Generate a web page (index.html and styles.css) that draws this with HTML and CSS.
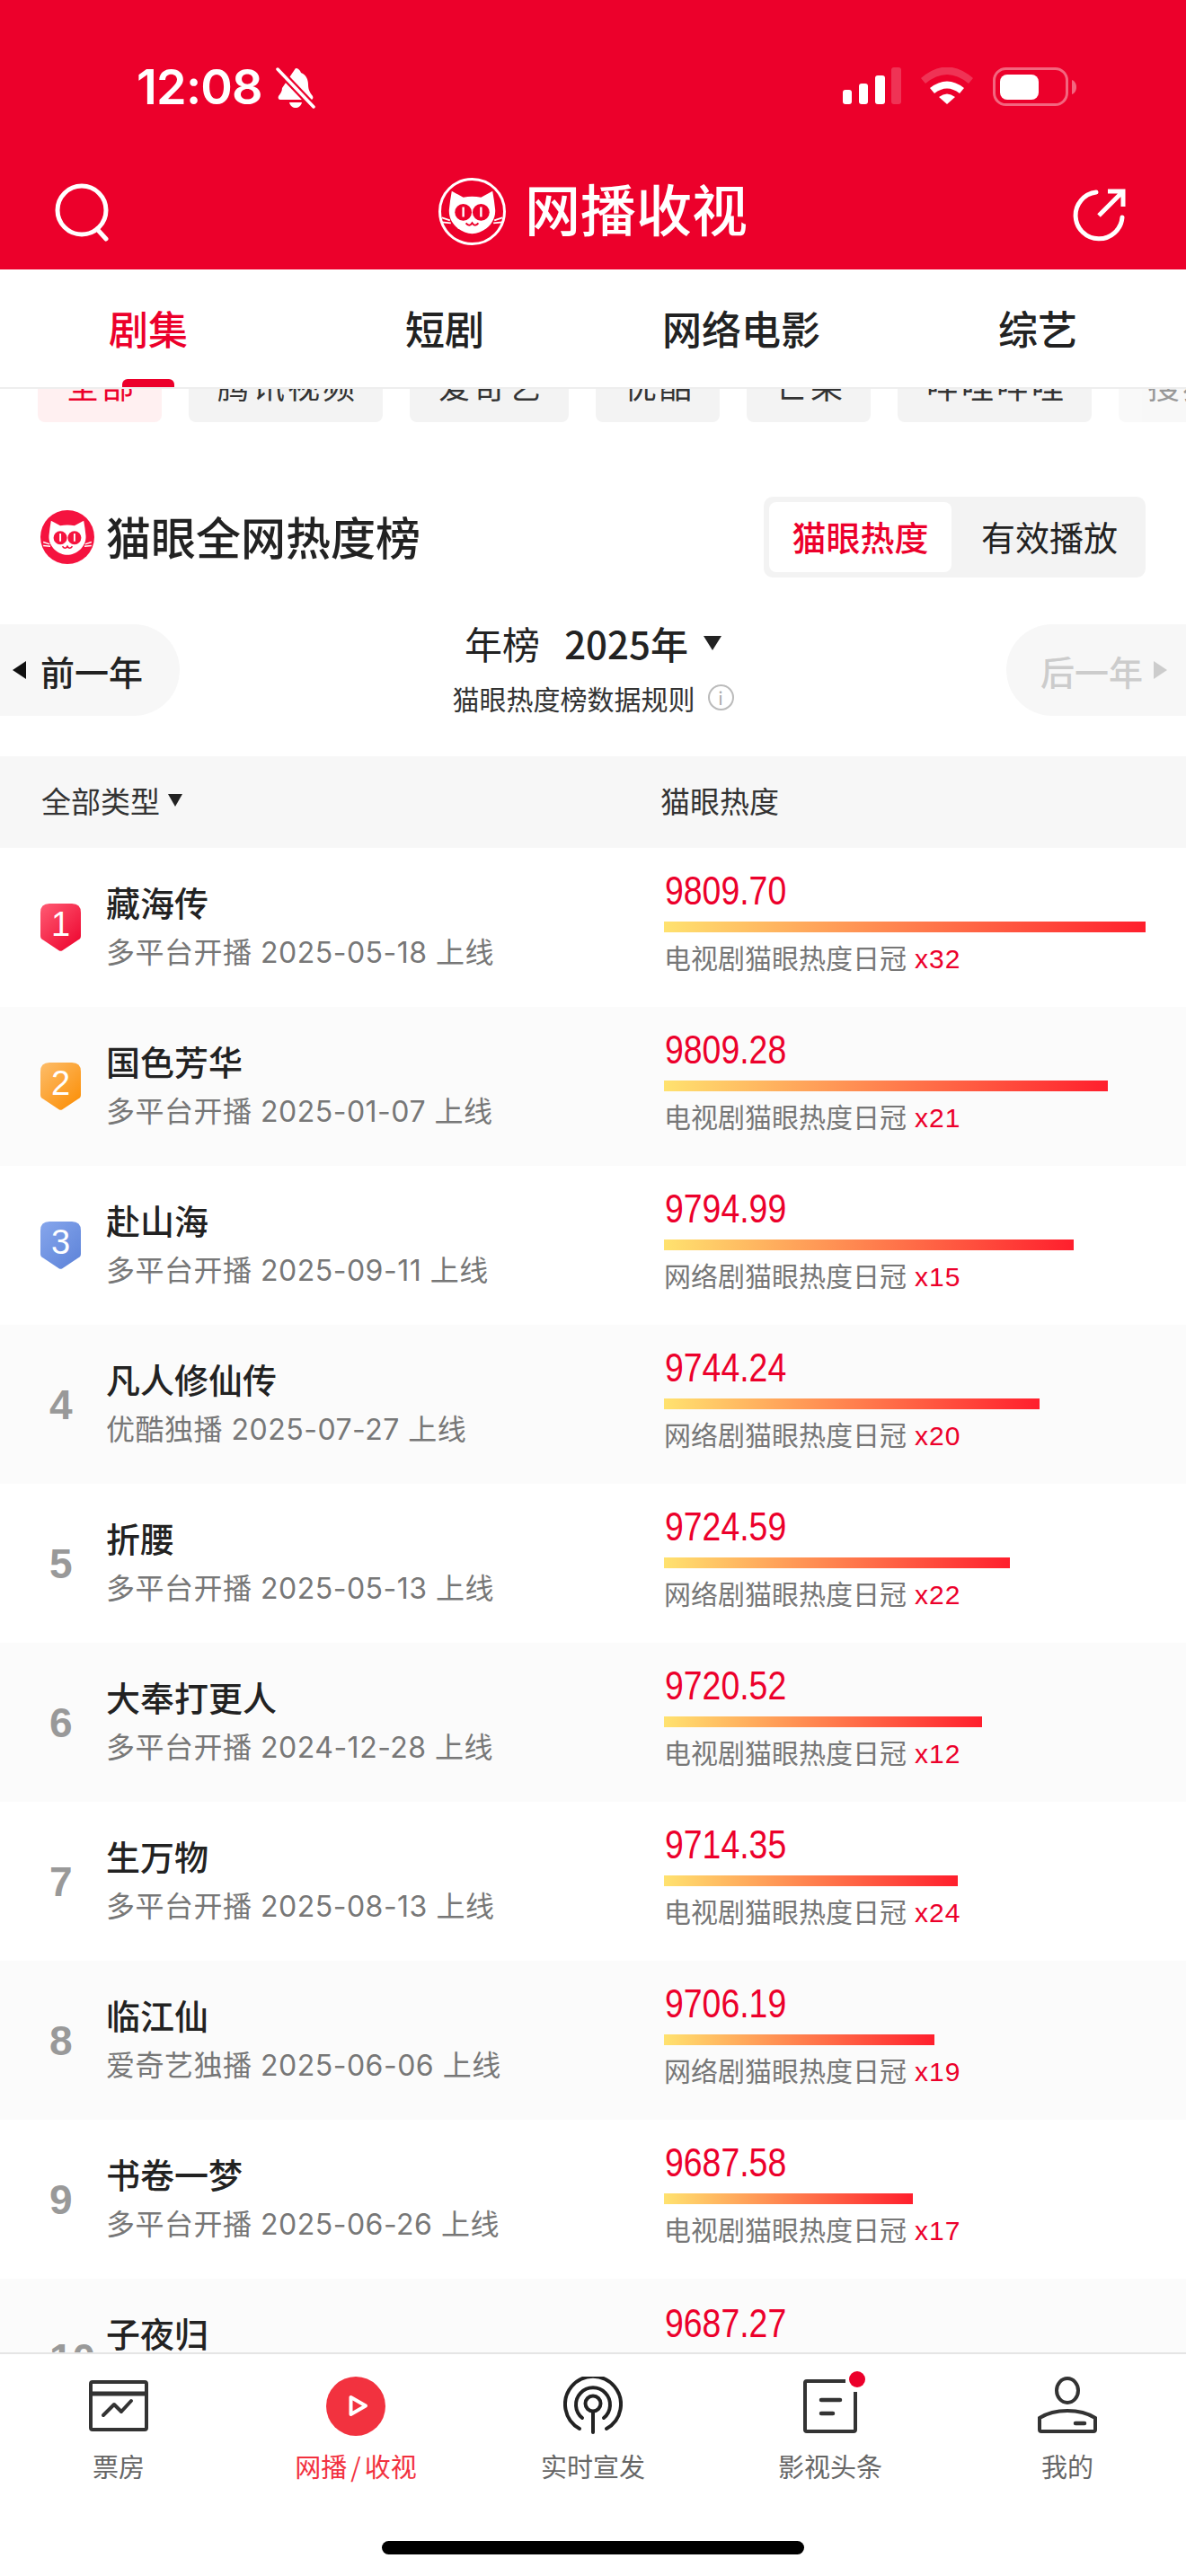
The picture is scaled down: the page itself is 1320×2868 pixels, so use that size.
FILE: index.html
```html
<!DOCTYPE html>
<html lang="zh-CN">
<head>
  <meta charset="UTF-8">
  <meta name="viewport" content="width=device-width, initial-scale=1.0">
  <title>网播收视</title>
  <link rel="stylesheet" href="styles.css">
</head>
<body>
  <!-- cat head, shared by the header logo and the chart title -->
  <svg class="defs" width="0" height="0">
    <symbol id="cat" viewBox="-38 -38 76 76">
      <path fill="#fff" d="M-23 -23 L-10 -16 Q0 -18 10 -16 L23 -23 Q25 -12 26 -2 C27 14 12 25 0 25 C-12 25 -27 14 -26 -2 Q-25 -12 -23 -23Z"/>
      <circle cx="-10" cy="1" r="9.500" fill="var(--cat-eye)"/>
      <circle cx="10" cy="1" r="9.500" fill="var(--cat-eye)"/>
      <path d="M-10 -5V6M10 -5V6" stroke="#fff" stroke-width="2.400" fill="none"/>
      <path d="M-7 13 Q-3 18 0 13 Q3 18 7 13" stroke="var(--cat-eye)" stroke-width="2" fill="none"/>
      <path d="M-34 7 L-25 10M-34 12 L-24 13M34 7 L25 10M34 12 L24 13" stroke="#fff" stroke-width="1.800" fill="none"/>
    </symbol>
  </svg>

  <header class="top">
    <div class="status">
      <div class="status-left">
        <span class="clock">12:08</span>
        <svg class="bell" width="44" height="46" viewBox="0 0 44 46">
          <path fill="#fff" d="M22 1c3 0 5 2 6 5 6 2 8 8 8 13 0 6 2 9 5 13 1 2 0 4-2 4H5c-2 0-3-2-2-4 2-3 4-5 4-9z"/>
          <path fill="#fff" d="M15 39h14c-1 4-4 6-7 6s-6-2-7-6z"/>
          <path d="M2 2l40 42" stroke="#ec002b" stroke-width="8"/>
          <path d="M2 2l40 42" stroke="#fff" stroke-width="3.500" stroke-linecap="round"/>
        </svg>
      </div>
      <div class="status-right">
        <svg width="65" height="41" viewBox="0 0 65 41">
          <rect x="0" y="25" width="10" height="16" rx="3" fill="#fff"/>
          <rect x="18" y="18" width="10" height="23" rx="3" fill="#fff"/>
          <rect x="36" y="9" width="11" height="32" rx="3" fill="#fff"/>
          <rect x="54" y="0" width="11" height="41" rx="3" fill="#fff" opacity=".2"/>
        </svg>
        <svg width="58" height="41" viewBox="0 0 58 41">
          <path d="M0 12 Q29 -13 58 12 L53 18 Q29 -2 5 18Z" fill="#fff" opacity=".2"/>
          <path d="M10 23 Q29 8 48 23 L43 29 Q29 18 15 29Z" fill="#fff"/>
          <path d="M20 33 Q29 26 38 33 L29 41Z" fill="#fff"/>
        </svg>
        <svg width="94" height="44" viewBox="0 0 94 44">
          <rect x="1.500" y="1.500" width="81" height="40" rx="13" fill="none" stroke="#fff" stroke-width="3" opacity=".4"/>
          <rect x="8" y="8" width="43" height="28" rx="8" fill="#fff"/>
          <path d="M88 14c3 1 5 4 5 8s-2 7-5 8z" fill="#fff" opacity=".4"/>
        </svg>
      </div>
    </div>
    <div class="titlebar">
      <svg width="66" height="66" viewBox="0 0 66 66" class="ico-search">
        <circle cx="31" cy="30" r="27" fill="none" stroke="#fff" stroke-width="5"/>
        <path d="M48 51l10 11" stroke="#fff" stroke-width="5" stroke-linecap="round"/>
      </svg>
      <div class="brand">
        <span class="brand-logo">
          <svg width="75" height="75"><use href="#cat"/></svg>
        </span>
        <span class="brand-name">网播收视</span>
      </div>
      <svg width="62" height="62" viewBox="0 0 62 62">
        <path d="M28 5A26 26 0 1 0 57 33" fill="none" stroke="#fff" stroke-width="5" stroke-linecap="round"/>
        <path d="M31 31L57 5M41 4h17v17" fill="none" stroke="#fff" stroke-width="5"/>
      </svg>
    </div>
  </header>

  <nav class="tabs">
    <a class="tab active">剧集</a>
    <a class="tab">短剧</a>
    <a class="tab">网络电影</a>
    <a class="tab">综艺</a>
  </nav>

  <div class="chips">
    <span class="chip chip-on">全部</span>
    <span class="chip">腾讯视频</span>
    <span class="chip">爱奇艺</span>
    <span class="chip">优酷</span>
    <span class="chip">芒果</span>
    <span class="chip">哔哩哔哩</span>
    <span class="chip chip-fade">搜狐</span>
  </div>

  <section class="head">
    <div class="head-title">
      <span class="head-logo">
        <svg width="60" height="60"><use href="#cat"/></svg>
      </span>
      <h1>猫眼全网热度榜</h1>
    </div>
    <div class="switch">
      <span class="switch-on">猫眼热度</span>
      <span class="switch-off">有效播放</span>
    </div>
  </section>

  <section class="years">
    <div class="year-btn prev"><i class="tri-left"></i>前一年</div>
    <div class="year-mid">
      <div class="year-now">年榜<b>2025年</b><i class="tri-down"></i></div>
      <div class="year-rule">猫眼热度榜数据规则<span class="info">i</span></div>
    </div>
    <div class="year-btn next">后一年<i class="tri-right"></i></div>
  </section>

  <div class="thead">
    <div class="thead-type">全部类型<i class="tri-small"></i></div>
    <div class="thead-val">猫眼热度</div>
  </div>

  <main class="list">
    <div class="row">
      <div class="rank"><span class="medal medal-1">1</span></div>
      <div class="info-col"><div class="name">藏海传</div><div class="meta">多平台开播 2025-05-18 上线</div></div>
      <div class="val-col"><div class="num">9809.70</div><div class="bar" style="width:536px"></div><div class="cap">电视剧猫眼热度日冠<em>x32</em></div></div>
    </div>
    <div class="row">
      <div class="rank"><span class="medal medal-2">2</span></div>
      <div class="info-col"><div class="name">国色芳华</div><div class="meta">多平台开播 2025-01-07 上线</div></div>
      <div class="val-col"><div class="num">9809.28</div><div class="bar" style="width:494px"></div><div class="cap">电视剧猫眼热度日冠<em>x21</em></div></div>
    </div>
    <div class="row">
      <div class="rank"><span class="medal medal-3">3</span></div>
      <div class="info-col"><div class="name">赴山海</div><div class="meta">多平台开播 2025-09-11 上线</div></div>
      <div class="val-col"><div class="num">9794.99</div><div class="bar" style="width:456px"></div><div class="cap">网络剧猫眼热度日冠<em>x15</em></div></div>
    </div>
    <div class="row">
      <div class="rank">4</div>
      <div class="info-col"><div class="name">凡人修仙传</div><div class="meta">优酷独播 2025-07-27 上线</div></div>
      <div class="val-col"><div class="num">9744.24</div><div class="bar" style="width:418px"></div><div class="cap">网络剧猫眼热度日冠<em>x20</em></div></div>
    </div>
    <div class="row">
      <div class="rank">5</div>
      <div class="info-col"><div class="name">折腰</div><div class="meta">多平台开播 2025-05-13 上线</div></div>
      <div class="val-col"><div class="num">9724.59</div><div class="bar" style="width:385px"></div><div class="cap">网络剧猫眼热度日冠<em>x22</em></div></div>
    </div>
    <div class="row">
      <div class="rank">6</div>
      <div class="info-col"><div class="name">大奉打更人</div><div class="meta">多平台开播 2024-12-28 上线</div></div>
      <div class="val-col"><div class="num">9720.52</div><div class="bar" style="width:354px"></div><div class="cap">电视剧猫眼热度日冠<em>x12</em></div></div>
    </div>
    <div class="row">
      <div class="rank">7</div>
      <div class="info-col"><div class="name">生万物</div><div class="meta">多平台开播 2025-08-13 上线</div></div>
      <div class="val-col"><div class="num">9714.35</div><div class="bar" style="width:327px"></div><div class="cap">电视剧猫眼热度日冠<em>x24</em></div></div>
    </div>
    <div class="row">
      <div class="rank">8</div>
      <div class="info-col"><div class="name">临江仙</div><div class="meta">爱奇艺独播 2025-06-06 上线</div></div>
      <div class="val-col"><div class="num">9706.19</div><div class="bar" style="width:301px"></div><div class="cap">网络剧猫眼热度日冠<em>x19</em></div></div>
    </div>
    <div class="row">
      <div class="rank">9</div>
      <div class="info-col"><div class="name">书卷一梦</div><div class="meta">多平台开播 2025-06-26 上线</div></div>
      <div class="val-col"><div class="num">9687.58</div><div class="bar" style="width:277px"></div><div class="cap">电视剧猫眼热度日冠<em>x17</em></div></div>
    </div>
    <!-- last row runs under the bottom nav, only the top of it shows -->
    <div class="row">
      <div class="rank">10</div>
      <div class="info-col"><div class="name">子夜归</div><div class="meta">&nbsp;</div></div>
      <div class="val-col"><div class="num">9687.27</div><div class="bar"></div><div class="cap">&nbsp;</div></div>
    </div>
  </main>

  <footer class="bottom">
    <div class="bottom-tabs">
      <a class="bt">
        <svg width="66" height="66" viewBox="0 0 66 66">
          <rect x="2" y="6" width="62" height="53" rx="2" fill="none" stroke="#333" stroke-width="4"/>
          <path d="M2 19h62" stroke="#333" stroke-width="5"/>
          <path d="M16 43l12-12 8 8 11-12" fill="none" stroke="#333" stroke-width="4" stroke-linecap="round" stroke-linejoin="round"/>
        </svg>
        <span>票房</span>
      </a>
      <a class="bt bt-on">
        <svg width="66" height="66" viewBox="0 0 66 66">
          <circle cx="33" cy="33" r="33" fill="#f2323f"/>
          <path d="M27.500 23V42L44 32.500Z" fill="none" stroke="#fff" stroke-width="4" stroke-linejoin="round"/>
        </svg>
        <span>网播<i class="slash">/</i>收视</span>
      </a>
      <a class="bt">
        <svg width="66" height="66" viewBox="0 0 66 66">
          <path d="M18 58A31 31 0 1 1 48 58" fill="none" stroke="#222" stroke-width="4" stroke-linecap="round"/>
          <path d="M21 46A19 19 0 1 1 45 46" fill="none" stroke="#222" stroke-width="4" stroke-linecap="round"/>
          <circle cx="33" cy="30" r="8.500" fill="none" stroke="#222" stroke-width="4"/>
          <path d="M33 39v23" stroke="#222" stroke-width="4" stroke-linecap="round"/>
        </svg>
        <span>实时宣发</span>
      </a>
      <a class="bt">
        <span class="bt-ico">
          <svg width="66" height="66" viewBox="0 0 66 66">
            <path d="M50 5H7a2 2 0 0 0-2 2V59a2 2 0 0 0 2 2H59a2 2 0 0 0 2-2V17" fill="none" stroke="#333" stroke-width="4"/>
            <path d="M23 26h21M23 41h13" stroke="#333" stroke-width="4.500" stroke-linecap="round"/>
          </svg>
          <i class="dot"></i>
        </span>
        <span>影视头条</span>
      </a>
      <a class="bt">
        <svg width="66" height="66" viewBox="0 0 66 66">
          <ellipse cx="33" cy="15.500" rx="12" ry="13.500" fill="none" stroke="#333" stroke-width="4"/>
          <path d="M2 46C10 41 22 38 33 38S56 41 64 46V59a2 2 0 0 1-2 2H4a2 2 0 0 1-2-2Z" fill="none" stroke="#333" stroke-width="4"/>
          <path d="M42 52h10" stroke="#333" stroke-width="4.500" stroke-linecap="round"/>
        </svg>
        <span>我的</span>
      </a>
    </div>
    <div class="homebar"></div>
  </footer>
</body>
</html>
```

FILE: styles.css
```css
* {
  box-sizing: border-box;
}

html,
body {
  margin: 0;
  height: 2868px;
}

body {
  display: flex;
  flex-direction: column;
  overflow: hidden;
  background: #fff;
  color: #222;
  font-family: "Noto Sans CJK SC", "Noto Sans", sans-serif;
}

.defs {
  display: block;
  height: 0;
}

/* red header */
.top {
  height: 300px;
  flex: none;
  background: #ec002b;
}

.status {
  height: 180px;
  padding: 75px 121px 0 152px;
  display: flex;
  justify-content: space-between;
  align-items: flex-start;
}

.status-left {
  display: flex;
  align-items: flex-start;
  gap: 15px;
}

.clock {
  font-family: Inter, sans-serif;
  font-weight: 600;
  font-size: 54px;
  line-height: 44px;
  color: #fff;
  letter-spacing: -.8px;
}

.status-right {
  display: flex;
  align-items: flex-start;
  gap: 22px;
}

.status-right svg {
  display: block;
}

.titlebar {
  display: flex;
  justify-content: space-between;
  align-items: center;
  height: 120px;
  padding: 0 66px 0 60px;
}

.ico-search {
  margin-top: -6px;
}

.brand {
  display: flex;
  align-items: center;
  gap: 21px;
  margin-left: 2px;
  margin-bottom: 10px;
}

.brand-logo {
  width: 75px;
  height: 75px;
  border: 3px solid #fff;
  border-radius: 50%;
  display: flex;
  align-items: center;
  justify-content: center;
  --cat-eye: #ec002b;
}

.brand-logo svg {
  flex: none;
}

.brand-name {
  font-size: 62px;
  line-height: 75px;
  font-weight: 500;
  color: #fff;
  margin-top: -8px;
}

/* first-level tabs */
.tabs {
  flex: none;
  height: 133px;
  display: grid;
  grid-template-columns: repeat(4, 330px);
  border-bottom: 2px solid #eee;
  background: #fff;
}

.tab {
  font-size: 44px;
  font-weight: 500;
  line-height: 131px;
  text-align: center;
  position: relative;
}

.tab.active {
  color: #ec002b;
}

.tab.active::after {
  content: "";
  position: absolute;
  left: 136px;
  bottom: 0;
  width: 58px;
  height: 9px;
  border-radius: 6px 6px 0 0;
  background: #ec002b;
}

/* platform chips, scrolled mostly under the tabs */
.chips {
  flex: none;
  height: 37px;
  overflow: hidden;
  display: flex;
  align-items: flex-end;
  gap: 30px;
  padding-left: 42px;
}

.chip {
  flex: none;
  height: 84px;
  padding: 0 28px 0 32px;
  border-radius: 8px;
  background: #f3f3f3;
  font-size: 36px;
  letter-spacing: 3px;
  line-height: 84px;
  color: #333;
}

.chip-on {
  background: #fff0f1;
  color: #ec002b;
}

.chip-fade {
  opacity: .5;
}

/* chart title */
.head {
  flex: none;
  margin-top: 83px;
  height: 90px;
  display: flex;
  justify-content: space-between;
  align-items: center;
  padding: 0 45px;
}

.head-title {
  display: flex;
  align-items: center;
  gap: 13px;
}

.head-logo {
  width: 60px;
  height: 60px;
  border-radius: 50%;
  background: #f5133f;
  display: block;
  --cat-eye: #f5133f;
}

.head-logo svg {
  display: block;
}

h1 {
  margin: -4px 0 0;
  font-size: 50px;
  line-height: 60px;
  font-weight: 500;
}

.switch {
  width: 425px;
  height: 90px;
  padding: 6px;
  border-radius: 10px;
  background: #f3f3f3;
  display: flex;
  font-size: 38px;
  line-height: 76px;
  text-align: center;
}

.switch-on {
  width: 203px;
  border-radius: 8px;
  background: #fff;
  color: #ec002b;
  font-weight: 500;
}

.switch-off {
  flex: 1;
  padding-left: 8px;
}

/* year switcher */
.years {
  flex: none;
  margin-top: 52px;
  height: 102px;
  display: flex;
  justify-content: space-between;
  align-items: center;
}

.year-btn {
  width: 200px;
  height: 102px;
  background: #f7f7f7;
  display: flex;
  align-items: center;
  font-size: 38px;
  font-weight: 500;
}

.prev {
  border-radius: 0 51px 51px 0;
  padding-left: 14px;
  gap: 16px;
}

.next {
  border-radius: 51px 0 0 51px;
  padding-left: 38px;
  gap: 12px;
  color: #ccc;
}

.tri-left,
.tri-right {
  width: 0;
  height: 0;
  border-top: 10px solid transparent;
  border-bottom: 10px solid transparent;
}

.tri-left {
  border-right: 15px solid #111;
}

.tri-right {
  border-left: 15px solid #ccc;
}

.year-mid {
  text-align: center;
  margin-top: -3px;
}

.year-now {
  font-size: 42px;
  line-height: 50px;
  display: flex;
  align-items: center;
  justify-content: center;
}

.year-now b {
  font-weight: 500;
  margin-left: 27px;
}

.tri-down,
.tri-small {
  width: 0;
  height: 0;
  border-left: 10px solid transparent;
  border-right: 10px solid transparent;
  border-top: 16px solid #222;
  margin-left: 17px;
}

.year-rule {
  margin-top: 14px;
  font-size: 30px;
  line-height: 44px;
  color: #333;
  display: flex;
  align-items: center;
  justify-content: center;
}

.info {
  width: 29px;
  height: 29px;
  margin-left: 14px;
  border: 2px solid #bbb;
  border-radius: 50%;
  color: #aaa;
  font-size: 20px;
  line-height: 25px;
  text-align: center;
}

/* table */
.thead {
  flex: none;
  margin-top: 45px;
  height: 102px;
  background: #f7f7f7;
  display: flex;
  align-items: center;
  font-size: 33px;
  color: #333;
  padding: 0 0 4px 46px;
}

.thead-type {
  width: 689px;
  display: flex;
  align-items: center;
}

.tri-small {
  border-left-width: 8px;
  border-right-width: 8px;
  border-top-width: 14px;
  margin-left: 9px;
}

.list {
  flex: 1;
  min-height: 0;
  overflow: hidden;
}

.row {
  height: 177px;
  display: flex;
  align-items: center;
}

.row:nth-child(even) {
  background: #fbfbfb;
}

.rank {
  width: 118px;
  flex: none;
  font-family: "Liberation Sans", sans-serif;
  font-size: 46px;
  font-weight: 700;
  color: #999;
  padding-left: 55px;
}

.medal {
  display: block;
  width: 45px;
  height: 53px;
  margin-left: -10px;
  clip-path: path("M10 0H35Q45 0 45 10V36Q45 39 42 40.500L24 52.500Q22.500 53 21 52.500L3 40.500Q0 39 0 36V10Q0 0 10 0Z");
  color: #fff;
  font-weight: 400;
  font-size: 38px;
  line-height: 47px;
  text-align: center;
}

.medal-1 {
  background: linear-gradient(135deg, #ff5b73, #ec002b);
}

.medal-2 {
  background: linear-gradient(135deg, #fdbd6a, #fb8c00);
}

.medal-3 {
  background: linear-gradient(135deg, #86a6ec, #5c82d8);
}

.info-col {
  width: 621px;
  flex: none;
  padding-top: 1px;
}

.name {
  font-size: 38px;
  line-height: 50px;
  font-weight: 500;
  margin-top: -2px;
}

.meta {
  margin-top: 7px;
  font-family: Inter, "Noto Sans CJK SC", sans-serif;
  font-size: 32px;
  letter-spacing: .5px;
  line-height: 50px;
  color: #777;
}

.val-col {
  padding: 1px 0 8px;
}

.num {
  font-family: "Liberation Sans", sans-serif;
  font-size: 44px;
  line-height: 50px;
  color: #ec002b;
  margin: -3px 0 0 1px;
  transform: scaleX(.85);
  transform-origin: left;
}

.bar {
  height: 12px;
  margin-top: 9px;
  background: linear-gradient(90deg, #ffe26f, #ff1f2d);
}

.cap {
  margin-top: 7px;
  font-size: 30px;
  line-height: 40px;
  color: #777;
}

.cap em {
  font-family: "Liberation Sans", sans-serif;
  font-style: normal;
  letter-spacing: 1px;
  color: #ec002b;
  margin-left: 9px;
}

/* bottom nav */
.bottom {
  flex: none;
  height: 249px;
  border-top: 2px solid #e5e5e5;
  background: #fff;
}

.bottom-tabs {
  display: grid;
  grid-template-columns: repeat(5, 264px);
  height: 208px;
  padding-top: 25px;
}

.bt {
  display: flex;
  flex-direction: column;
  align-items: center;
  gap: 15px;
  font-size: 29px;
  line-height: 36px;
  color: #666;
}

.bt svg {
  display: block;
}

.bt-on {
  color: #f2323f;
}

.slash {
  font-style: normal;
  margin: 0 4px;
}

.bt-ico {
  position: relative;
  display: block;
}

.dot {
  position: absolute;
  top: -6px;
  right: -6px;
  width: 18px;
  height: 18px;
  border-radius: 50%;
  background: #ec002b;
}

.homebar {
  width: 470px;
  height: 15px;
  margin: 0 auto;
  border-radius: 8px;
  background: #000;
}
```
